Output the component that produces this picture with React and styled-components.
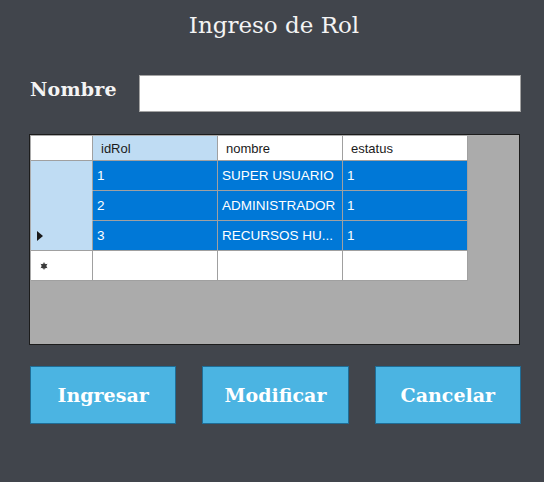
import React from "react";
import styled, { createGlobalStyle } from "styled-components";

const Global = createGlobalStyle`
  html, body { margin: 0; padding: 0; background: #41454c; }
  body { width: 544px; height: 482px; overflow: hidden; }
`;

const Page = styled.div`
  width: 544px;
  height: 482px;
  box-sizing: border-box;
  padding: 10px 23px 0 30px;
  display: flex;
  flex-direction: column;
  font-family: "DejaVu Serif", "Liberation Serif", serif;
  color: #f4f4f4;
`;

const Title = styled.h1`
  margin: 0;
  height: 30px;
  line-height: 30px;
  text-align: center;
  font-size: 23px;
  font-weight: normal;
  padding-right: 3px;
`;

const FormRow = styled.div`
  margin-top: 35px;
  display: flex;
  align-items: flex-start;
  gap: 18px;
`;

const Label = styled.label`
  font-size: 19px;
  font-weight: bold;
  width: 91px;
  flex: none;
  line-height: 24px;
  margin-top: 2px;
  letter-spacing: 0.2px;
`;

const TextInput = styled.input`
  flex: 1;
  height: 37px;
  box-sizing: border-box;
  border: 1px solid #a3a3a3;
  background: #fff;
  outline: none;
  margin: 0;
`;

const GridFrame = styled.div`
  margin-top: 22px;
  margin-left: -1px;
  width: 491px;
  height: 211px;
  box-sizing: border-box;
  border: 1px solid #1c1c1c;
  background: #ababab;
  padding: 1px;
  font-family: "Liberation Sans", Arial, sans-serif;
  font-size: 13.5px;
`;

const Table = styled.div`
  display: grid;
  grid-template-columns: 62px 125px 125px 125px;
  grid-auto-rows: 30px;
  grid-template-rows: 25px;
`;

const Cell = styled.div`
  box-sizing: border-box;
  border-right: 1px solid #a0a0a0;
  border-bottom: 1px solid ${(p) => (p.$merge ? "transparent" : "#a0a0a0")};
  display: flex;
  align-items: center;
  padding-left: ${(p) => (p.$header ? "8px" : "4px")};
  white-space: nowrap;
  overflow: hidden;
  font-size: ${(p) => (p.$header ? "13px" : "inherit")};
  background: ${(p) =>
    p.$variant === "sel"
      ? "#0078d7"
      : p.$variant === "light"
      ? "#bfdcf3"
      : "#ffffff"};
  color: ${(p) => (p.$variant === "sel" ? "#ffffff" : "#1a1a1a")};
`;

const RowHead = styled(Cell)`
  padding-left: 6px;
`;

const Buttons = styled.div`
  margin-top: 21px;
  display: flex;
  gap: 26px;
`;

const Button = styled.button`
  flex: 1;
  height: 58px;
  box-sizing: border-box;
  background: #4bb4e2;
  border: 1px solid #1f6d96;
  color: #ffffff;
  font-family: "DejaVu Serif", "Liberation Serif", serif;
  font-size: 19px;
  font-weight: bold;
  padding: 0;
  cursor: pointer;
`;

const Arrow = () => (
  <svg width="6" height="10" viewBox="0 0 6 10">
    <path d="M0 0 L6 5 L0 10 Z" fill="#1a1a1a" />
  </svg>
);

const Star = () => (
  <svg width="8" height="8" viewBox="0 0 8 8" style={{ marginLeft: 3 }}>
    <circle cx="4" cy="4" r="2.6" fill="#3a3a3a" />
    <path d="M4 0.5 V7.5 M0.8 2.2 L7.2 5.8 M0.8 5.8 L7.2 2.2" stroke="#3a3a3a" strokeWidth="1" />
  </svg>
);

const rows = [
  ["1", "SUPER USUARIO", "1"],
  ["2", "ADMINISTRADOR", "1"],
  ["3", "RECURSOS HU...", "1"],
];

export default function App() {
  return (
    <>
      <Global />
      <Page>
        <Title>Ingreso de Rol</Title>
        <FormRow>
          <Label>Nombre</Label>
          <TextInput />
        </FormRow>
        <GridFrame>
          <Table>
            <Cell />
            <Cell $header $variant="light">idRol</Cell>
            <Cell $header>nombre</Cell>
            <Cell $header>estatus</Cell>
            {rows.map((r, i) => (
              <React.Fragment key={i}>
                <RowHead $variant="light" $merge={i < 2}>
                  {i === 2 ? <Arrow /> : null}
                </RowHead>
                {r.map((v, j) => (
                  <Cell key={j} $variant="sel">{v}</Cell>
                ))}
              </React.Fragment>
            ))}
            <RowHead>
              <Star />
            </RowHead>
            <Cell />
            <Cell />
            <Cell />
          </Table>
        </GridFrame>
        <Buttons>
          <Button>Ingresar</Button>
          <Button>Modificar</Button>
          <Button>Cancelar</Button>
        </Buttons>
      </Page>
    </>
  );
}
